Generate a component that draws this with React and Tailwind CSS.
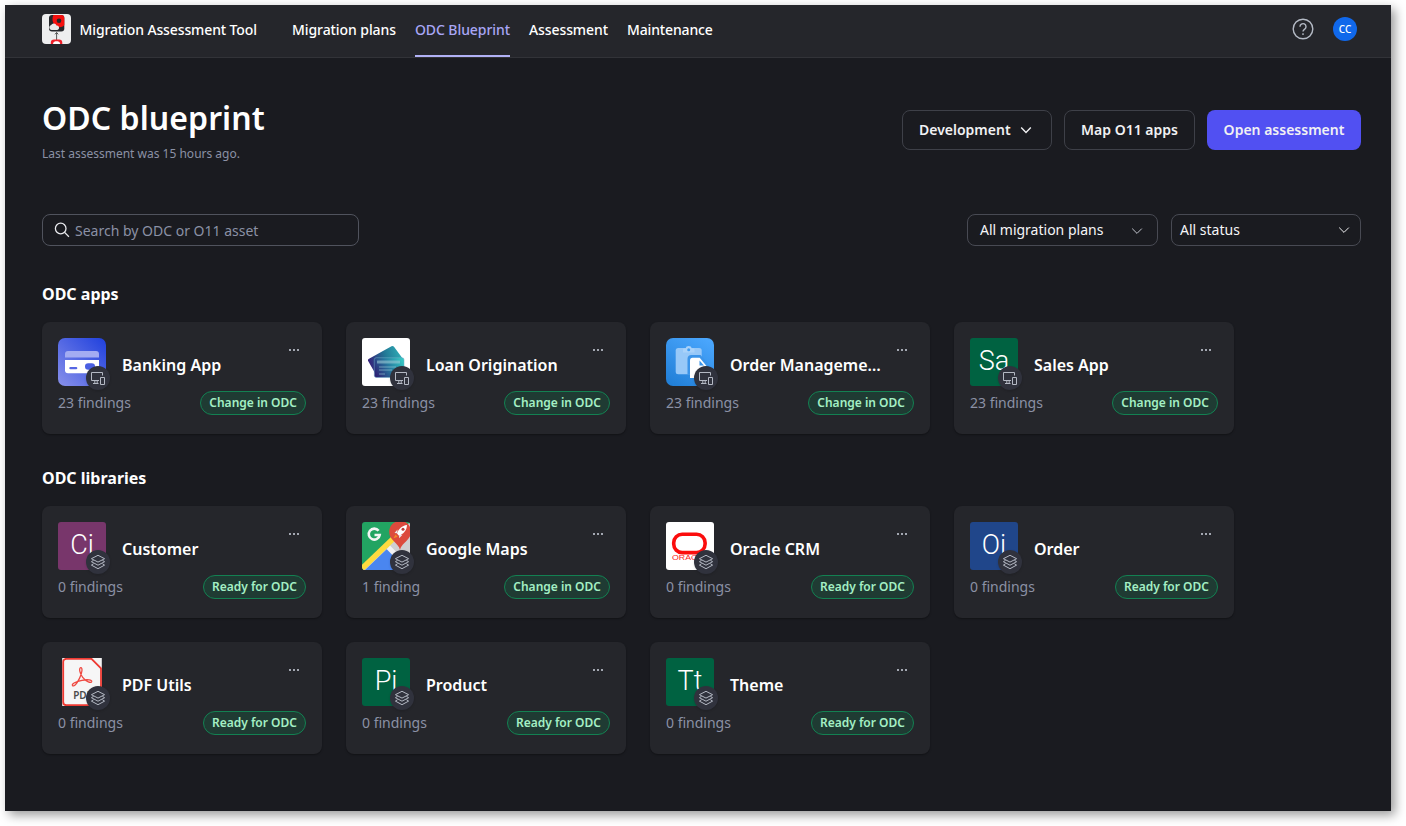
import React from "react";

function ToolLogo() {
  return (
    <svg width="29" height="30" viewBox="0 0 29 30" className="shrink-0">
      <rect width="29" height="30" rx="4" fill="#eeeeef" />
      <rect x="7" y="1" width="15.3" height="16.6" rx="3" fill="#26272b" />
      <path d="M11.500 1h7.800a3 3 0 0 1 3 3v7c-1.500 2-4.500 2.700-6.500 1.900C12.500 11.900 10.500 8.200 10.500 5.200c0-1.600.4-3.200 1-4.200z" fill="#f5100f" />
      <circle cx="17" cy="6.800" r="2.300" fill="#26272b" />
      <path d="M9.500 16a2.500 2.500 0 0 1-.4-4.900 3 3 0 0 1 5.400.4 2.300 2.300 0 0 1 .9 4.500z" fill="#e9e9ea" />
      <path d="M14.600 26v-7.500M13 20.300l1.600-1.800 1.600 1.800" fill="none" stroke="#444" strokeWidth=".9" />
      <path d="M8.800 30v-1.200a3.300 3.300 0 0 1 3.300-3.300h4.900a3.300 3.300 0 0 1 3.300 3.300V30z" fill="#f0202a" />
      <path d="M11 30c.3-2.200 2-2.700 3.600-2.700s3.300.5 3.600 2.700z" fill="#fff" />
    </svg>
  );
}

function Chevron({ className }) {
  return (
    <svg width="12" height="12" viewBox="0 0 12 12" className={className} fill="none" stroke="currentColor">
      <path d="M1.200 3.600 6 8.400l4.800-4.800" />
    </svg>
  );
}

function BankingIcon() {
  return (
    <svg width="48" height="48" viewBox="0 0 48 48">
      <defs>
        <linearGradient id="bank" x1="0" y1="1" x2="1" y2="0">
          <stop offset="0" stopColor="#8890ea" />
          <stop offset="1" stopColor="#1f40dd" />
        </linearGradient>
      </defs>
      <rect width="48" height="48" rx="7" fill="url(#bank)" />
      <path d="M7 19.500V16a3 3 0 0 1 3-3h28a3 3 0 0 1 3 3v3.500z" fill="#a3acf2" />
      <path d="M7 22h34v10.300a3 3 0 0 1-3 3H10a3 3 0 0 1-3-3z" fill="#fff" />
      <rect x="11.300" y="29" width="8" height="2.300" rx="1.100" fill="#5566e3" />
      <rect x="27" y="25.300" width="10" height="6.400" rx="3.200" fill="#4a5fe2" />
    </svg>
  );
}

function LoanIcon() {
  return (
    <svg width="48" height="48" viewBox="0 0 48 48">
      <defs>
        <linearGradient id="loanBack" x1="0" y1=".5" x2="1" y2=".3">
          <stop offset="0" stopColor="#35207a" />
          <stop offset=".5" stopColor="#227795" />
          <stop offset="1" stopColor="#2fb0b8" />
        </linearGradient>
        <linearGradient id="loanFront" x1="0" y1=".7" x2="1" y2=".3">
          <stop offset="0" stopColor="#2c2476" />
          <stop offset=".55" stopColor="#2880a2" />
          <stop offset="1" stopColor="#35c4c2" />
        </linearGradient>
      </defs>
      <rect width="48" height="48" rx="3" fill="#fff" />
      <path d="M7 20.700 29.500 8.200q1.500-.6 2.500.5L41 21 22 37l-9-2-7-12.300q-.4-1.300 1-2z" fill="url(#loanBack)" />
      <rect x="12.300" y="19.700" width="29.700" height="19.800" rx="2" fill="url(#loanFront)" stroke="#6fabc6" strokeWidth=".5" />
      <rect x="15" y="22.600" width="23" height="3" rx=".5" fill="#9bc8d4" opacity=".6" />
      <path d="M17 29h17M17 32h13M17 36h6" stroke="#a4d4de" strokeWidth=".8" opacity=".7" />
    </svg>
  );
}

function OrderManagementIcon() {
  return (
    <svg width="48" height="48" viewBox="0 0 48 48">
      <defs>
        <linearGradient id="orders" x1=".2" y1="1" x2=".8" y2="0">
          <stop offset="0" stopColor="#2280d8" />
          <stop offset="1" stopColor="#4aa6fd" />
        </linearGradient>
      </defs>
      <rect width="48" height="48" rx="7" fill="url(#orders)" />
      <rect x="9.700" y="10" width="26" height="26.300" rx="2.500" fill="#97c8f8" />
      <path d="M17 14.500v-3q0-1 1-1h1.500a3.300 3.300 0 0 1 6.400 0h1.600q1 0 1 1v3z" fill="#a9d2fa" />
      <circle cx="22.700" cy="11.700" r="1.500" fill="#3f9cf2" />
      <path d="M21.500 36.500V21a4 4 0 0 1 4-4h9l7 8v11z" fill="#3b94e9" />
      <path d="M24 40V22.200a2.500 2.500 0 0 1 2.500-2.500h7.200L40.500 28v12z" fill="#fff" />
      <path d="M33.500 22.500v5h4.500z" fill="#3b94e9" />
    </svg>
  );
}

function MapsIcon() {
  return (
    <svg width="48" height="48" viewBox="0 0 48 48">
      <defs>
        <clipPath id="mapsClip">
          <rect width="48" height="48" rx="3" />
        </clipPath>
      </defs>
      <g clipPath="url(#mapsClip)">
        <rect width="48" height="48" fill="#22a462" />
        <path d="M48 0v48H0z" fill="#cfcfd1" />
        <path d="M3 48 26.500 25.500 48 47v1z" fill="#4a86f0" />
        <path d="m24.500 27 3.500-3.500L48 44v4h-3z" fill="#f2f2f2" />
        <path d="M0 46.500 34 14" stroke="#fedb3f" strokeWidth="5.500" />
        <path d="M38 28c-1.200-7-10.800-9.500-10.800-18C27.200 3.500 32 -1 38.500 -1S49 4 49 10c0 8-9.800 11-11 18z" fill="#dc4a3d" />
        <path d="M16.600 8.700a5.500 5.500 0 1 0 1.100 4.300h-5.200" fill="none" stroke="#f3f5f4" strokeWidth="2.600" />
        <path d="m33.500 12.500-2 3.700 4.200-1.500z" fill="#f58b25" />
        <path d="M35 11.500c1.500-4.500 5-8 10-8.500 0 5-3.500 9-8 10.800z" fill="#fff" />
        <path d="m35.500 7.500-3 3.500 2.800.3zM40.500 12.700l-3.300 3.500-.2-3z" fill="#e6e6ee" />
        <circle cx="41" cy="7.300" r="1.500" fill="#bb3c37" />
      </g>
    </svg>
  );
}

function OracleIcon() {
  return (
    <svg width="48" height="48" viewBox="0 0 48 48">
      <rect width="48" height="48" rx="3" fill="#fff" />
      <rect x="7.700" y="12.200" width="31.400" height="18.400" rx="8.500" fill="none" stroke="#fb0d0d" strokeWidth="3.600" />
      <text x="6" y="38" fontSize="6.800" textLength="36" lengthAdjust="spacingAndGlyphs" fill="#fb2020" className="font-['Liberation_Sans',sans-serif]">ORACLE</text>
    </svg>
  );
}

function PdfIcon() {
  return (
    <svg width="48" height="48" viewBox="0 0 48 48">
      <rect x="4.200" width="39.600" height="48" fill="#f4f4f4" />
      <path d="M5.200 4a3.200 3.200 0 0 1 3.200-3.200H33.500L43 10.300V44a3.200 3.200 0 0 1-3.200 3.200H8.400A3.200 3.200 0 0 1 5.200 44z" fill="#f6f6f6" stroke="#ee3a32" strokeWidth="1.800" />
      <path d="M14.500 27.500c-1.200-1.500 3.500-4 9.500-5.200s10-.3 9.700 1.200c-.5 2-5.500.2-9-4.200s-3.700-9.500-2-9.700c2-.2 1.700 5-1.200 10.800s-5.800 8.700-7 7.100z" fill="none" stroke="#ef4a42" strokeWidth="1.300" />
      <text x="15.200" y="41.300" fontSize="10" fontWeight="600" fill="#4b4b4b" className="font-['Noto_Sans',sans-serif]">PDF</text>
    </svg>
  );
}

function LetterIcon({ letters, color }) {
  return (
    <div className={`flex size-12 justify-center rounded-[3px] font-['Roboto',sans-serif] text-[27px] leading-[46px] font-[350] text-white ${color}`}>
      {letters}
    </div>
  );
}

function KindBadge({ library }) {
  return (
    <span className="absolute -right-1 -bottom-1 size-6 rounded-full bg-[#30323d] shadow-sm">
      <svg width="24" height="24" viewBox="0 0 24 24" fill="none" stroke="#b4b9c4">
        {library ? (
          <path strokeLinejoin="round" d="M12 5.300 18.600 8.700 12 12.100 5.400 8.700zM7.600 10.300 5.400 11.700 12 15.200l6.600-3.500-2.200-1.400M7.600 13.700l-2.200 1.400L12 18.700l6.600-3.600-2.200-1.400" />
        ) : (
          <path d="M16.500 9.500v-3h-11v8h7.500M7 17.500h5.500M8.800 17.300v-2.500M11.200 17.300v-2.500M14.500 11.500h4v7h-4z" />
        )}
      </svg>
    </span>
  );
}

function AssetCard({ name, findings, status, icon, library }) {
  return (
    <article className="h-28 w-[280px] rounded-lg bg-[#25262b] px-4 pt-4 shadow-[0_1px_2px_rgba(0,0,0,0.35)]">
      <div className="flex h-12">
        <div className="relative size-12 shrink-0">
          {icon}
          <KindBadge library={library} />
        </div>
        <h3 className="ml-4 w-[152px] pt-[15px] text-base leading-6 font-semibold whitespace-nowrap text-white">{name}</h3>
        <svg width="10" height="2" viewBox="0 0 10 2" className="mt-[11px] ml-[15px] fill-[#a3a7b1]">
          <path d="M0 0h2v2H0zM4 0h2v2H4zM8 0h2v2H8z" />
        </svg>
      </div>
      <div className="mt-[5px] flex h-6 items-center justify-between">
        <span className="text-sm text-[#8b91a5]">{findings}</span>
        <span className="flex h-6 items-center rounded-full border border-[#138152] bg-[#1f3b33] px-2 text-xs font-semibold text-[#a4efc4]">
          {status}
        </span>
      </div>
    </article>
  );
}

const change = "Change in ODC";
const ready = "Ready for ODC";

const apps = [
  { name: "Banking App", findings: "23 findings", status: change, icon: <BankingIcon /> },
  { name: "Loan Origination", findings: "23 findings", status: change, icon: <LoanIcon /> },
  { name: "Order Manageme…", findings: "23 findings", status: change, icon: <OrderManagementIcon /> },
  { name: "Sales App", findings: "23 findings", status: change, icon: <LetterIcon letters="Sa" color="bg-[#006241]" /> },
];

const libraries = [
  { name: "Customer", findings: "0 findings", status: ready, icon: <LetterIcon letters="Ci" color="bg-[#78366b]" /> },
  { name: "Google Maps", findings: "1 finding", status: change, icon: <MapsIcon /> },
  { name: "Oracle CRM", findings: "0 findings", status: ready, icon: <OracleIcon /> },
  { name: "Order", findings: "0 findings", status: ready, icon: <LetterIcon letters="Oi" color="bg-[#20468a]" /> },
  { name: "PDF Utils", findings: "0 findings", status: ready, icon: <PdfIcon /> },
  { name: "Product", findings: "0 findings", status: ready, icon: <LetterIcon letters="Pi" color="bg-[#006241]" /> },
  { name: "Theme", findings: "0 findings", status: ready, icon: <LetterIcon letters="Tt" color="bg-[#006241]" /> },
];

function AssetSection({ title, assets, library, className }) {
  return (
    <section className={className}>
      <h2 className="text-base leading-6 font-bold text-white">{title}</h2>
      <div className="mt-4 flex flex-wrap gap-6">
        {assets.map((asset) => (
          <AssetCard key={asset.name} library={library} {...asset} />
        ))}
      </div>
    </section>
  );
}

export default function App() {
  return (
    <div className="h-[826px] w-[1406px] overflow-hidden bg-white p-[5px] font-['Noto_Sans',sans-serif]">
      <div className="h-[806px] w-[1386px] bg-[#1a1b20] shadow-[4px_4px_10px_rgba(0,0,0,0.4)]">
        <header className="flex h-[53px] items-center border-b border-[#323338] bg-[#25262b] pr-[34px] pl-[37px] text-sm font-medium text-white">
          <div className="flex w-[250px] items-center gap-[8.5px] pb-1 tracking-[-0.12px] whitespace-nowrap">
            <ToolLogo />
            <span className="pt-0.5">Migration Assessment Tool</span>
          </div>
          <nav className="flex h-full gap-[19px] tracking-[-0.08px] whitespace-nowrap">
            <a className="flex items-center pb-0.5">Migration plans</a>
            <a className="flex items-center border-b-2 border-[#b1b1f5] text-[#a9a6f6]">ODC Blueprint</a>
            <a className="flex items-center pb-0.5">Assessment</a>
            <a className="flex items-center pb-0.5 tracking-[-0.14px]">Maintenance</a>
          </nav>
          <div className="ml-auto flex items-center gap-[19px] pb-1">
            <svg width="22" height="22" viewBox="0 0 22 22" fill="none" stroke="#b4bac5" strokeWidth="1.400">
              <circle cx="11" cy="11" r="9.800" />
              <path d="M8 8.700a3 3 0 1 1 4.700 2.400c-1 .7-1.700 1.200-1.700 2.400" />
              <path d="M11 15.200v1.700" />
            </svg>
            <span className="flex size-6 items-center justify-center rounded-full bg-[#1068eb] text-[10px]">CC</span>
          </div>
        </header>

        <main className="pt-10 pr-[30px] pl-[37px]">
          <div className="flex h-16 items-center justify-between">
            <div className="h-16">
              <h1 className="text-[32px] leading-10 font-semibold tracking-[0.06px] text-white">ODC blueprint</h1>
              <p className="mt-[7px] text-xs leading-[18px] text-[#8b91a5]">Last assessment was 15 hours ago.</p>
            </div>
            <div className="flex gap-3 text-sm font-semibold whitespace-nowrap text-[#f1f1f3]">
              <button className="flex h-10 w-[150px] items-center rounded-lg border border-[#3e4048] pl-4">
                Development
                <Chevron className="ml-[9.5px] stroke-[1.4]" />
              </button>
              <button className="h-10 w-[131px] rounded-lg border border-[#3e4048]">Map O11 apps</button>
              <button className="h-10 w-[154px] rounded-lg bg-[#5150f2]">Open assessment</button>
            </div>
          </div>

          <div className="mt-[52px] flex h-8 justify-between text-sm">
            <div className="flex w-[317px] items-center rounded-lg border border-[#50535d] pl-[11px] text-[#8b91a5]">
              <svg width="16" height="16" viewBox="0 0 16 16" fill="none" stroke="#e9eaee" strokeWidth="1.300">
                <circle cx="6.700" cy="6.500" r="5.300" />
                <path d="m10.600 10.400 4.300 4.300" />
              </svg>
              <span className="ml-[5px] pt-px">Search by ODC or O11 asset</span>
            </div>
            <div className="flex gap-[13px] text-[#f5f5f7]">
              <div className="flex w-[191px] items-center justify-between rounded-lg border border-[#484a53] pr-[14px] pl-3">
                All migration plans
                <Chevron className="mt-0.5 text-[#c4c7cf]" />
              </div>
              <div className="flex w-[190px] items-center justify-between rounded-lg border border-[#484a53] pr-[10px] pl-2">
                All status
                <Chevron className="text-[#f2f2f4]" />
              </div>
            </div>
          </div>

          <AssetSection className="mt-9" title="ODC apps" assets={apps} />
          <AssetSection className="mt-8" title="ODC libraries" assets={libraries} library />
        </main>
      </div>
    </div>
  );
}
